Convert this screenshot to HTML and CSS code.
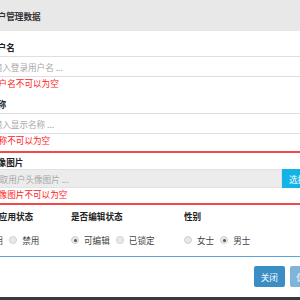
FILE: index.html
```html
<!doctype html>
<html lang="zh-CN">

<head>
    <meta charset="utf-8">
    <meta name="viewport" content="width=device-width, initial-scale=1.0">
    <title>用户管理数据</title>
    <link rel="stylesheet" href="styles.css">
</head>

<body>
    <div class="modal">
        <div class="modal-header">
            <h4 class="modal-title">用户管理数据</h4>
        </div>

        <div class="modal-body">
            <!-- user name -->
            <div class="field">
                <label class="field-label">用户名</label>
                <input class="field-input" type="text" placeholder="请输入登录用户名 ...">
                <div class="field-error">用户名不可以为空</div>
            </div>

            <!-- display name -->
            <div class="field">
                <label class="field-label">名称</label>
                <input class="field-input" type="text" placeholder="请输入显示名称 ...">
                <div class="field-error">名称不可以为空</div>
            </div>

            <!-- avatar, in error state -->
            <div class="field field-invalid">
                <label class="field-label">头像图片</label>
                <div class="file-group">
                    <input class="field-input file-input" type="text" placeholder="选取用户头像图片 ..." readonly>
                    <button class="file-btn" type="button">选择</button>
                </div>
                <div class="field-error">头像图片不可以为空</div>
            </div>

            <!-- radio groups -->
            <div class="radio-row">
                <div class="radio-col">
                    <div class="field-label">帐户的应用状态</div>
                    <div class="radio-options">
                        <label class="radio"><input type="radio" name="state">启用</label>
                        <label class="radio"><input type="radio" name="state">禁用</label>
                    </div>
                </div>
                <div class="radio-col">
                    <div class="field-label">是否编辑状态</div>
                    <div class="radio-options">
                        <label class="radio"><input type="radio" name="edit" checked>可编辑</label>
                        <label class="radio"><input type="radio" name="edit">已锁定</label>
                    </div>
                </div>
                <div class="radio-col">
                    <div class="field-label">性别</div>
                    <div class="radio-options">
                        <label class="radio"><input type="radio" name="sex">女士</label>
                        <label class="radio"><input type="radio" name="sex" checked>男士</label>
                    </div>
                </div>
            </div>
        </div>

        <div class="modal-footer">
            <button class="btn btn-close" type="button">关闭</button>
            <button class="btn btn-save" type="button">保存</button>
        </div>
    </div>
    <div class="page-bar"></div>
</body>

</html>
```

FILE: styles.css
```css
/* base */
html,
body {
    margin: 0;
    padding: 0;
    background: #fff;
    overflow: hidden;
}

body {
    width: 300px;
    height: 300px;
    display: flex;
    flex-direction: column;
    font-family: "Noto Sans CJK SC", "Noto Sans", sans-serif;
    font-size: 8.6px;
    line-height: 12px;
    color: #333;
}

/* modal is wider than the window, its edges are cut off */
.modal {
    margin-left: -24px;
    width: 344px;
    flex: 1;
}

.modal-header {
    height: 31px;
    background: #e8e8e8;
    display: flex;
    align-items: center;
    padding-left: 13px;
}

.modal-title {
    margin: 0;
    font-size: 8.6px;
    font-weight: bold;
}

.modal-body {
    padding: 10px 0 0 6px;
}

/* form fields */
.field {
    display: flex;
    flex-direction: column;
    margin-bottom: 9px;
}

.field-label {
    display: block;
    padding-left: 7px;
    font-weight: bold;
    color: #222;
}

.field-input {
    box-sizing: border-box;
    height: 21px;
    margin-top: 3px;
    padding: 0 2px;
    border: 1px solid #dedde8;
    font-family: inherit;
    font-size: 8.6px;
    color: #555;
    background: #fff;
    outline: none;
}

.field-input::placeholder {
    color: #a8a8a8;
}

.field-error {
    padding-left: 8px;
    color: #f22;
}

/* avatar group: red frame */
.field-invalid {
    margin-top: -4px;
    margin-bottom: 0;
    padding: 3px 0 3px;
    border-top: 2px solid #f04a4a;
    border-bottom: 2px solid #f04a4a;
}

.file-group {
    display: flex;
    margin-top: 1px;
}

.file-input {
    flex: 0 0 300px;
    height: 19px;
    margin-top: 0;
    padding-left: 8px;
    background: #ececec;
    border-color: #e2e2e2;
}

.file-btn {
    flex: 1;
    height: 19px;
    border: none;
    padding: 0 0 0 7px;
    text-align: left;
    background: #12b4e6;
    color: #fff;
    font-family: inherit;
    font-size: 8.6px;
}

/* radio groups */
.radio-row {
    display: grid;
    grid-template-columns: 98px 113px 1fr;
    margin: 5px 0 0 -9px;
    padding-bottom: 10px;
    border-bottom: 1px solid #5aa6d6;
}

.radio-col .field-label {
    padding-left: 0;
}

.radio-options {
    display: flex;
    gap: 6px;
    margin-top: 12px;
}

.radio {
    display: flex;
    align-items: center;
    color: #444;
}

.radio input {
    appearance: none;
    box-sizing: border-box;
    width: 8px;
    height: 8px;
    margin: 0 5px 0 0;
    border: 1px solid #d0d0d0;
    border-radius: 50%;
    background: #e8e8e8;
    display: grid;
    place-items: center;
}

.radio input:checked::after {
    content: "";
    width: 3px;
    height: 3px;
    border-radius: 50%;
    background: #555;
}

/* footer */
.modal-footer {
    display: flex;
    gap: 5px;
    padding: 9px 0 0 278px;
}

.btn {
    height: 21px;
    padding: 0;
    border: none;
    border-radius: 2px;
    color: #fff;
    font-family: inherit;
    font-size: 8.6px;
}

.btn-close {
    width: 33px;
    background: #3a8ec4;
}

.btn-save {
    width: 33px;
    background: #80b4d8;
}

.page-bar {
    height: 3px;
    background: #3a3a3a;
}
```
